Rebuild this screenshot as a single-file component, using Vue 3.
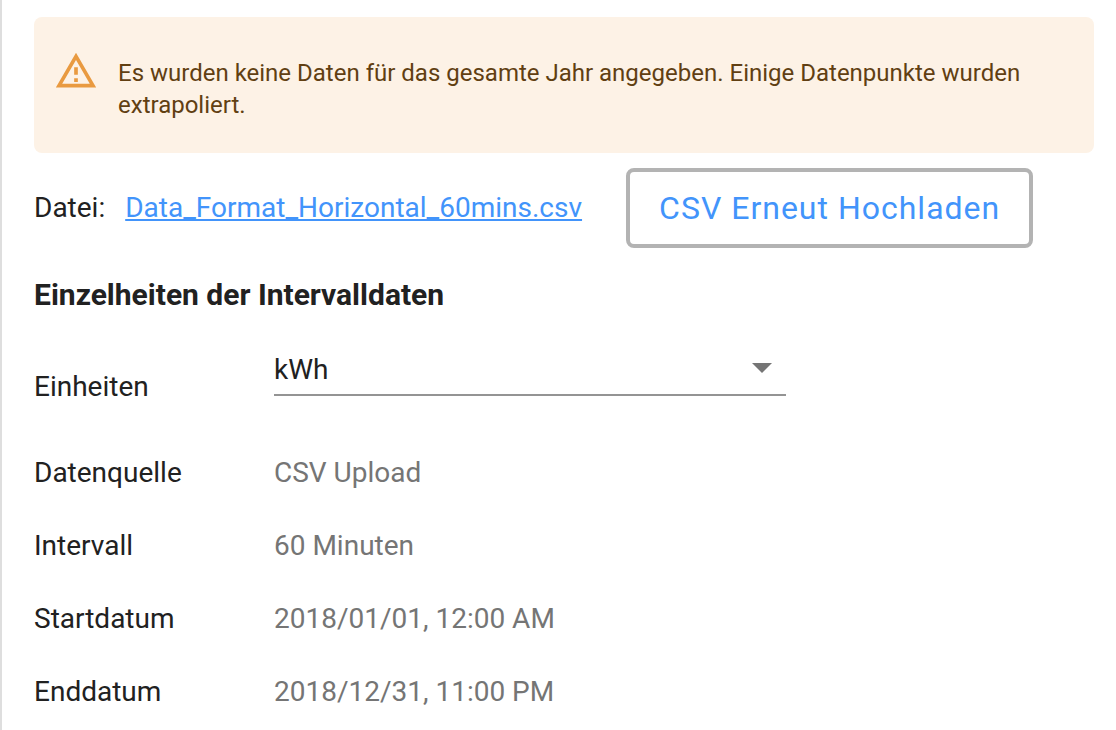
<script setup>
import { ref } from 'vue'

const unit = ref('kWh')
const details = [
  { label: 'Datenquelle', value: 'CSV Upload' },
  { label: 'Intervall', value: '60 Minuten' },
  { label: 'Startdatum', value: '2018/01/01, 12:00 AM' },
  { label: 'Enddatum', value: '2018/12/31, 11:00 PM' }
]
</script>

<template>
  <main class="panel">
    <div class="alert" role="alert">
      <svg class="alert-icon" viewBox="0 0 24 24" aria-hidden="true">
        <path d="M12 5.99 19.53 19H4.47L12 5.99M12 2 1 21h22L12 2zm1 14h-2v2h2v-2zm0-6h-2v4h2v-4z" />
      </svg>
      <p class="alert-text">Es wurden keine Daten für das gesamte Jahr angegeben. Einige Datenpunkte wurden extrapoliert.</p>
    </div>

    <div class="file-row">
      <span class="file-label">Datei:</span>
      <a class="file-link" href="#">Data_Format_Horizontal_60mins.csv</a>
      <button class="upload" type="button">CSV Erneut Hochladen</button>
    </div>

    <h2 class="heading">Einzelheiten der Intervalldaten</h2>

    <div class="unit-row">
      <label class="unit-label" for="unit">Einheiten</label>
      <div class="select-wrap">
        <select id="unit" v-model="unit" class="select">
          <option>kWh</option>
          <option>kW</option>
        </select>
        <svg class="arrow" viewBox="0 0 20 10" aria-hidden="true"><path d="M0 0h20L10 10z" /></svg>
      </div>
    </div>

    <dl class="details">
      <div v-for="item in details" :key="item.label" class="detail">
        <dt>{{ item.label }}</dt>
        <dd>{{ item.value }}</dd>
      </div>
    </dl>
  </main>
</template>

<style>
body {
  background: #fff;
}
</style>

<style scoped>
.panel {
  box-sizing: border-box;
  min-height: 100vh;
  padding: 17px 22px 0 32px;
  border-left: 2px solid #dedede;
  font-family: Roboto, sans-serif;
  font-size: 28px;
  line-height: 33px;
  color: #212121;
}
.alert {
  display: flex;
  padding: 32px 32px 32px 20px;
  border-radius: 8px;
  background: #fdf2e6;
}
.alert-icon {
  flex: none;
  width: 44px;
  height: 44px;
  fill: #e99a40;
}
.alert-text {
  margin: 8px 0 0 20px;
  font-size: 24px;
  line-height: 32px;
  color: #613f12;
}
.file-row {
  display: flex;
  align-items: center;
  margin-top: 15px;
  line-height: 32px;
}
.file-link {
  margin-left: 20px;
  color: #4294fb;
  text-decoration: underline;
}
.upload {
  margin-left: 44px;
  padding: 0 29px;
  height: 80px;
  border: 4px solid #b3b3b3;
  border-radius: 8px;
  background: #fff;
  font: 400 32px/38px Roboto, sans-serif;
  letter-spacing: 1px;
  color: #4294fb;
}
.heading {
  margin: 30px 0 0;
  font-size: 30px;
  line-height: 33px;
  font-weight: 700;
}
.unit-row {
  display: flex;
  align-items: flex-start;
  margin-top: 38px;
}
.unit-label {
  width: 240px;
  margin-top: 21px;
}
.select-wrap {
  position: relative;
  flex: 0 1 512px;
}
.select {
  display: block;
  width: 100%;
  height: 47px;
  padding: 0 0 4px;
  border: 0;
  border-bottom: 2px solid #949494;
  border-radius: 0;
  background: transparent;
  appearance: none;
  font: 28px/33px Roboto, sans-serif;
  color: #212121;
}
.arrow {
  position: absolute;
  right: 14px;
  top: 14px;
  width: 20px;
  height: 10px;
  fill: #757575;
  pointer-events: none;
}
.details {
  display: grid;
  gap: 40px;
  margin: 53px 0 0;
}
.detail {
  display: flex;
}
dt {
  width: 240px;
}
dd {
  margin: 0;
  color: #757575;
}
</style>
